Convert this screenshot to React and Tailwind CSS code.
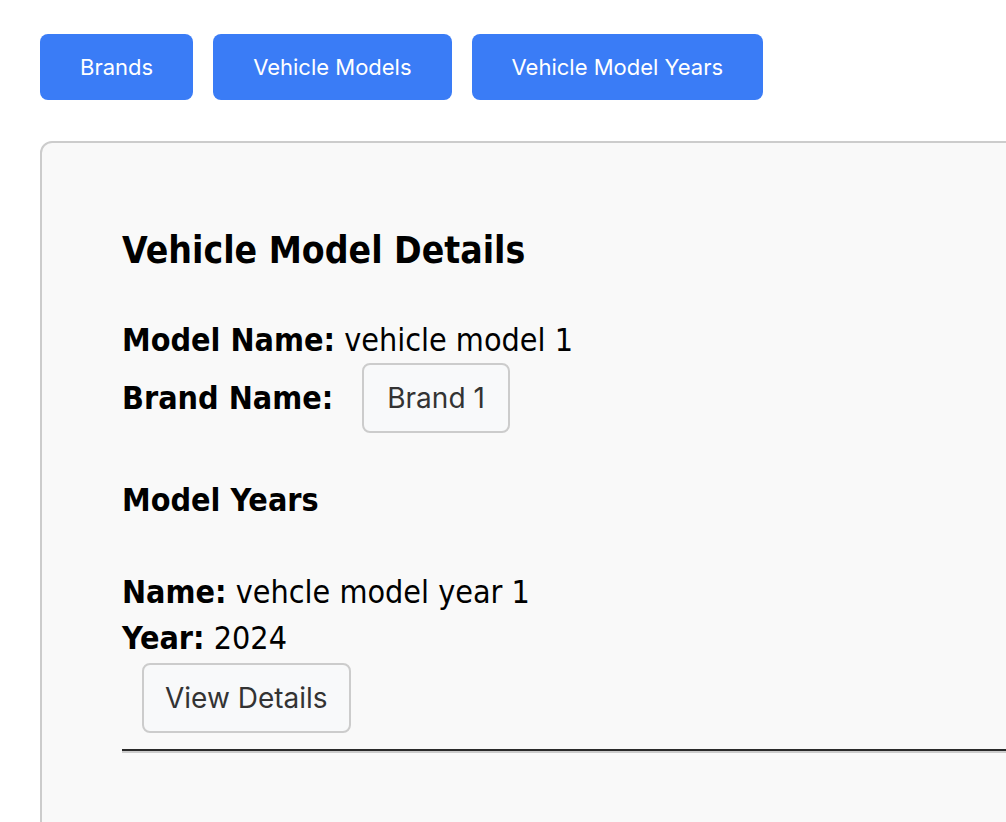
import React from 'react';

const navItems = ['Brands', 'Vehicle Models', 'Vehicle Model Years'];

const modelYears = [{ id: 1, name: 'vehcle model year 1', year: 2024 }];

const App = () => {
  return (
    <div className="w-[1006px] h-[822px] overflow-hidden bg-white pt-[34px] pl-[40px]">
      {/* Top navigation */}
      <div className="flex gap-[20px]">
        {navItems.map((item) => (
          <button
            key={item}
            className="h-[66px] px-[40px] rounded-[8px] bg-[#3a7cf6] text-white text-[22px] font-['Inter',sans-serif]"
          >
            {item}
          </button>
        ))}
      </div>

      {/* Details card */}
      <div className="mt-[41px] w-[1100px] h-[800px] rounded-[12px] border-2 border-[#cccccc] bg-[#f9f9f9] pl-[80px] pt-[85px] font-['DejaVu_Sans_Condensed','DejaVu_Sans',sans-serif] text-black">
        <h2 className="text-[37px] leading-[46px] font-bold">Vehicle Model Details</h2>

        <p className="mt-[47px] text-[32px] leading-[38px]">
          <strong>Model Name:</strong> vehicle model 1
        </p>
        <div className="mt-[4px] flex items-center">
          <strong className="text-[32px] leading-[38px]">Brand Name:</strong>
          <button className="ml-[29px] h-[70px] px-[23px] rounded-[8px] border-2 border-[#cccccc] bg-[#f8f9fa] text-[#333] text-[28px] font-['Inter',sans-serif]">
            Brand 1
          </button>
        </div>

        <h4 className="mt-[48px] text-[32px] leading-[38px] font-bold">Model Years</h4>

        <div className="mt-[54px]">
          {modelYears.map((my) => (
            <div key={my.id}>
              <p className="text-[32px] leading-[38px]">
                <strong>Name:</strong> {my.name}
              </p>
              <p className="mt-[8px] text-[32px] leading-[38px]">
                <strong>Year:</strong> {my.year}
              </p>
              <button className="ml-[20px] mt-[6px] h-[70px] px-[21px] rounded-[8px] border-2 border-[#cccccc] bg-[#f8f9fa] text-[#333] text-[28px] font-['Inter',sans-serif]">
                View Details
              </button>
              <hr className="mt-[16px] border-t-2 border-b-2 border-t-[#2a2a2a] border-b-[#cccccc]" />
            </div>
          ))}
        </div>
      </div>
    </div>
  );
};

export default App;
